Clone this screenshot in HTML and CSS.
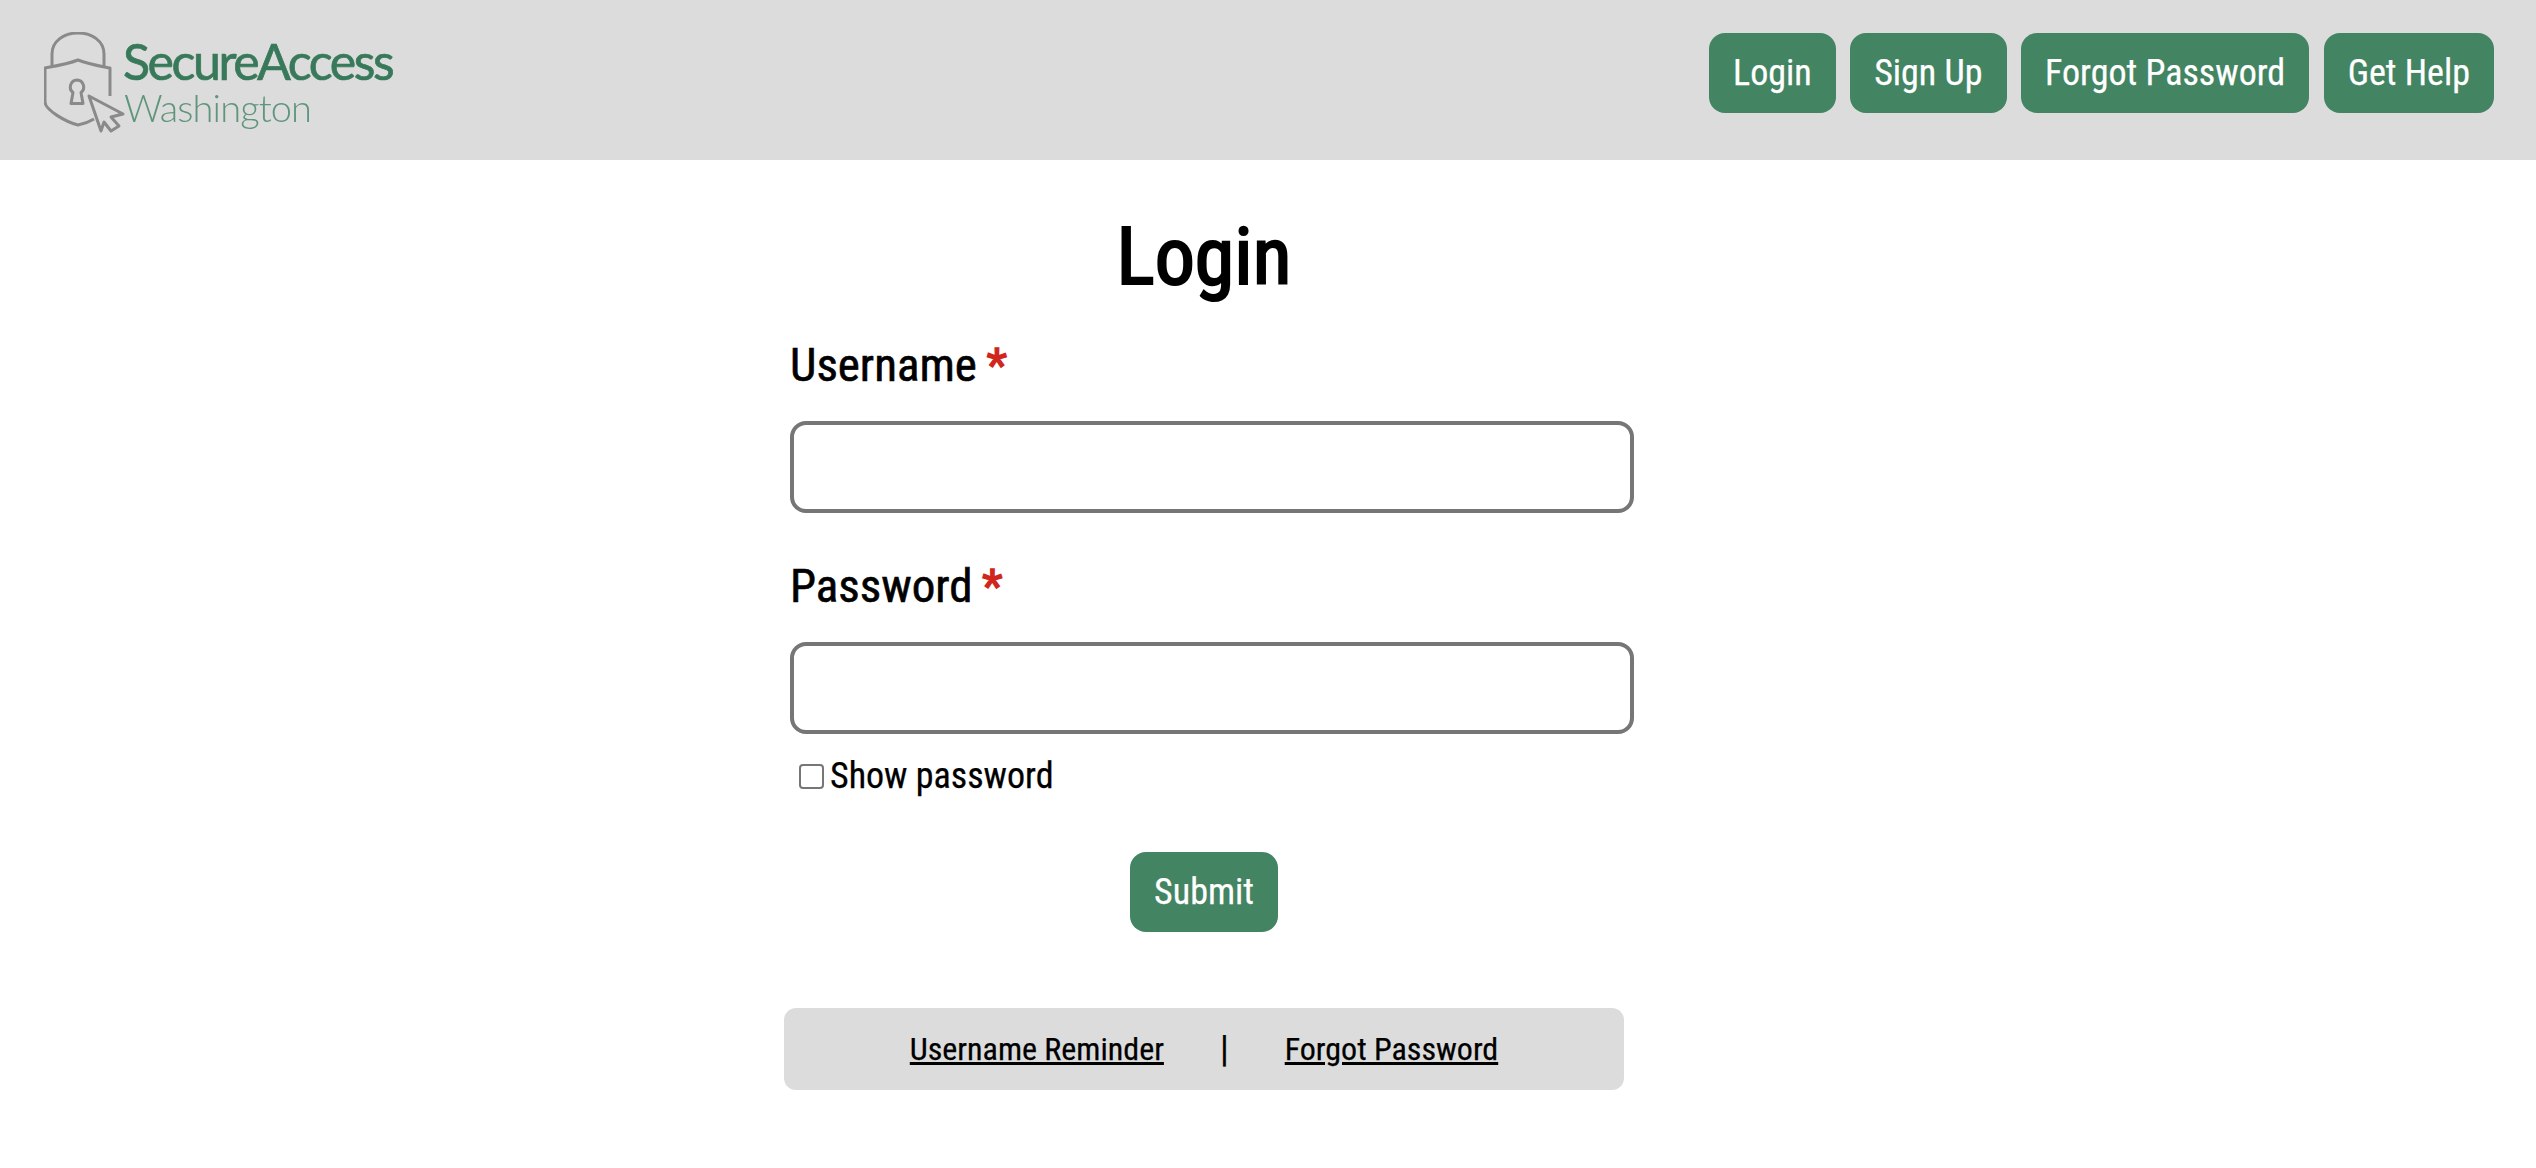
FILE: index.html
```html
<!DOCTYPE html>
<html lang="en">
<head>
  <meta charset="UTF-8">
  <meta name="viewport" content="width=device-width, initial-scale=1.0">
  <title>SecureAccess Washington</title>
  <link rel="stylesheet" href="styles.css">
</head>
<body>
  <header class="topbar">
    <a class="logo" href="#">
      <svg class="logo-lock" viewBox="0 0 84 104" width="84" height="104" fill="none" stroke="#8a8a8a" stroke-width="3" stroke-linejoin="round">
        <path d="M8 35V22C8 9 20 1 34 1C48 1 60 9 60 22V35"/>
        <path d="M66 64V36C56 34 44 32 34 28C24 32 12 34 1 36V70C1 78 22 90 34 93C40 92 45 90 50 87"/>
        <path d="M33 48a7 7 0 0 1 4 12.5l2 11H27l2-11A7 7 0 0 1 33 48Z"/>
        <path d="M45 64L79 82L67 85L75 94L67 99L60 90L57 99Z" fill="#dcdcdc"/>
      </svg>
      <span class="logo-text">
        <span class="logo-name">SecureAccess</span>
        <span class="logo-state">Washington</span>
      </span>
    </a>
    <nav class="topnav">
      <a class="btn" href="#">Login</a>
      <a class="btn" href="#">Sign Up</a>
      <a class="btn" href="#">Forgot Password</a>
      <a class="btn" href="#">Get Help</a>
    </nav>
  </header>

  <main class="login">
    <h1>Login</h1>
    <form class="login-form">
      <label class="field-label" for="username">Username <span class="req">*</span></label>
      <input class="field-input" id="username" type="text">
      <label class="field-label" for="password">Password <span class="req">*</span></label>
      <input class="field-input" id="password" type="password">
      <label class="show-pass"><input type="checkbox">Show password</label>
      <div class="submit-row"><button class="btn" type="button">Submit</button></div>
    </form>
    <div class="login-links">
      <a href="#">Username Reminder</a>
      <span class="sep">|</span>
      <a href="#">Forgot Password</a>
    </div>
  </main>
</body>
</html>
```

FILE: styles.css
```css
* {
  box-sizing: border-box;
}

body {
  margin: 0;
  background: #fff;
  color: #000;
  font-family: Roboto, "Liberation Sans", sans-serif;
  font-stretch: 75%;
  -webkit-text-stroke: .25px currentColor;
}

.topbar {
  display: flex;
  justify-content: space-between;
  align-items: flex-start;
  height: 160px;
  padding: 33px 42px 0 44px;
  background: #dcdcdc;
}

.logo {
  display: flex;
  margin-top: -1px;
  text-decoration: none;
  filter: blur(.4px);
}

.logo-text {
  display: flex;
  flex-direction: column;
  margin-left: -5px;
  font-family: Lato, sans-serif;
  font-stretch: normal;
  color: #38795a;
}

.logo-name {
  margin-top: 4px;
  font-size: 50px;
  line-height: 50px;
  letter-spacing: -2.4px;
  -webkit-text-stroke: .7px #38795a;
}

.logo-state {
  margin-left: 1px;
  font-size: 38px;
  font-weight: 300;
  line-height: 42px;
  letter-spacing: -.9px;
  color: #5f957b;
  -webkit-text-stroke: 0;
}

.topnav {
  display: flex;
  gap: 14.5px;
}

.btn {
  display: block;
  height: 80px;
  padding: 0 24px;
  border: 0;
  border-radius: 16px;
  background: #438462;
  color: #fff;
  font-family: inherit;
  font-stretch: inherit;
  font-size: 36px;
  line-height: 80px;
  text-decoration: none;
}

.login {
  width: 840px;
  margin-left: 784px;
}

h1 {
  margin: 0;
  padding: 49px 0 33px;
  font-size: 80px;
  line-height: 96px;
  font-weight: 400;
  text-align: center;
  -webkit-text-stroke: 2.2px #000;
}

.login-form {
  padding-left: 6px;
}

.field-label {
  display: block;
  font-size: 47px;
  line-height: 54px;
  -webkit-text-stroke: .6px currentColor;
}

.req {
  margin-left: -1px;
  color: #d0261c;
  -webkit-text-stroke: 1.4px currentColor;
}

.field-input {
  display: block;
  width: 844px;
  height: 92px;
  margin: 29px 0 46px;
  border: 4px solid #767676;
  border-radius: 16px;
  background: #fff;
}

#password {
  margin-bottom: 0;
}

.show-pass {
  display: flex;
  align-items: center;
  gap: 6px;
  margin-top: 19px;
  padding-left: 9px;
  font-size: 36px;
  line-height: 46px;
}

.show-pass input {
  appearance: none;
  width: 25px;
  height: 25px;
  margin: 0;
  border: 2px solid #767676;
  border-radius: 4px;
  background: #fff;
}

.submit-row {
  display: flex;
  justify-content: center;
  margin: 53px 0 0 -6px;
}

.login-links {
  display: flex;
  justify-content: center;
  align-items: center;
  gap: 56px;
  height: 82px;
  margin-top: 76px;
  border-radius: 12px;
  background: #dcdcdc;
  font-size: 32px;
}

.login-links a {
  color: #000;
}

.sep {
  font-size: 36px;
}
```
